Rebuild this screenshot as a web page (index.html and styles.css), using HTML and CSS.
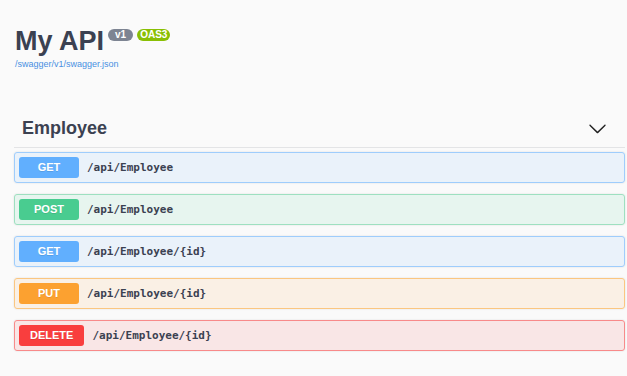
FILE: index.html
```html
<!DOCTYPE html>
<html lang="en">
<head>
    <meta charset="UTF-8">
    <title>My API</title>
    <link rel="stylesheet" href="styles.css">
</head>
<body>
    <div class="wrapper">
        <div class="info">
            <h2 class="title">
                <span>My API</span>
                <span class="pill pill-version">v1</span>
                <span class="pill pill-oas">OAS3</span>
            </h2>
            <a class="spec-link" href="#">/swagger/v1/swagger.json</a>
        </div>

        <div class="tag-section">
            <h3 class="tag">
                <span>Employee</span>
                <svg class="arrow" width="19" height="19" viewBox="0 0 20 20">
                    <path d="M17.418 6.109c.272-.268.709-.268.979 0s.271.701 0 .969l-7.908 7.83c-.27.268-.707.268-.979 0l-7.908-7.830c-.27-.268-.27-.701 0-.969.271-.268.709-.268.979 0L10 13.25l7.418-7.141z"></path>
                </svg>
            </h3>

            <div class="opblock opblock-get">
                <span class="method">GET</span>
                <span class="path">/api/Employee</span>
            </div>
            <div class="opblock opblock-post">
                <span class="method">POST</span>
                <span class="path">/api/Employee</span>
            </div>
            <div class="opblock opblock-get">
                <span class="method">GET</span>
                <span class="path">/api/Employee/{id}</span>
            </div>
            <div class="opblock opblock-put">
                <span class="method">PUT</span>
                <span class="path">/api/Employee/{id}</span>
            </div>
            <div class="opblock opblock-delete">
                <span class="method">DELETE</span>
                <span class="path">/api/Employee/{id}</span>
            </div>
        </div>
    </div>
</body>
</html>
```

FILE: styles.css
```css
body{
    margin: 0;
    background: #fafafa;
    font-family: "Liberation Sans", Arial, sans-serif;
    color: #3b4151;
}
.wrapper{
    padding: 0 2px 0 14px;
}
.info{
    padding-top: 26px;
}
.title{
    display: flex;
    align-items: flex-start;
    margin: 0;
    padding-left: 1px;
    font-size: 27px;
    line-height: 31px;
    font-weight: bold;
}
.pill{
    margin: 3px 0 0 4px;
    padding: 0 7px;
    border-radius: 6px;
    font-size: 10px;
    line-height: 12px;
    color: #fff;
}
.pill-version{
    background: #7d8492;
}
.pill-oas{
    padding: 0 3px;
    background: #89bf04;
}
.spec-link{
    display: block;
    margin: 2px 0 0 1px;
    font-size: 9px;
    line-height: 11px;
    color: #4990e2;
    text-decoration: none;
}
.tag-section{
    margin-top: 40px;
}
.tag{
    display: flex;
    align-items: center;
    justify-content: space-between;
    margin: 0 0 4px;
    padding: 7px 18px 7px 8px;
    border-bottom: 1px solid #e3e4e6;
    font-size: 18px;
    line-height: 23px;
    font-weight: bold;
}
.arrow{
    fill: #222;
}
.opblock{
    display: flex;
    align-items: center;
    margin-bottom: 11px;
    padding: 4px;
    border: 1px solid;
    border-radius: 3px;
    box-shadow: 0 0 2px rgba(0,0,0,.12);
}
.method{
    min-width: 60px;
    padding: 0 11px;
    box-sizing: border-box;
    border-radius: 3px;
    font-size: 11px;
    line-height: 21px;
    font-weight: bold;
    text-align: center;
    color: #fff;
    text-shadow: 0 1px 0 rgba(0,0,0,.1);
}
.path{
    padding: 0 8px;
    font-family: "DejaVu Sans Mono", "Liberation Mono", monospace;
    font-size: 11px;
    font-weight: bold;
    color: #3b4151;
}
.opblock-get{
    background: rgba(97,175,254,.1);
    border-color: #9fcdfc;
}
.opblock-get .method{
    background: #61affe;
}
.opblock-post{
    background: rgba(73,204,144,.1);
    border-color: #9ee0c0;
}
.opblock-post .method{
    background: #49cc90;
}
.opblock-put{
    background: rgba(252,161,48,.1);
    border-color: #fbc680;
}
.opblock-put .method{
    background: #fca130;
}
.opblock-delete{
    background: rgba(249,62,62,.1);
    border-color: #f88a8a;
}
.opblock-delete .method{
    background: #f93e3e;
}
```
